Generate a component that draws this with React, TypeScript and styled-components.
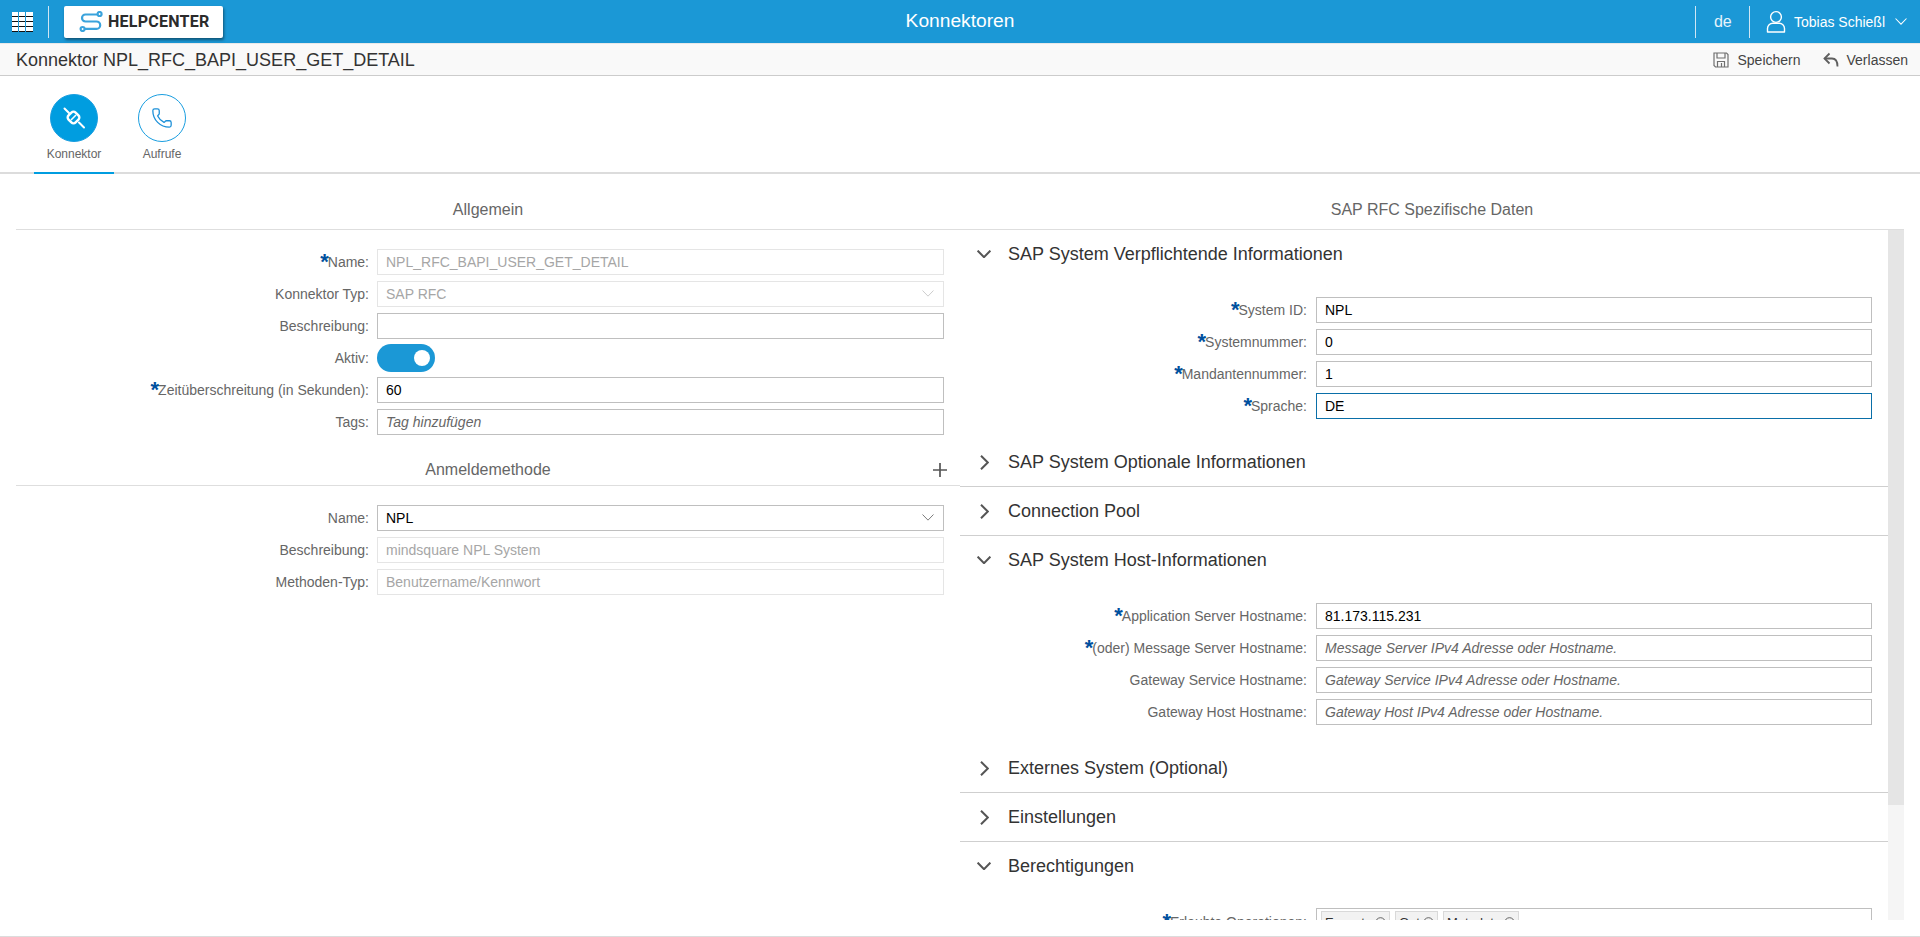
import React from "react";
import styled, { createGlobalStyle } from "styled-components";
import { Phone } from "lucide-react";

const Global = createGlobalStyle`
  html, body { margin: 0; padding: 0; height: 100%; background: #fff; overflow: hidden; }
  body { font-family: "Liberation Sans", Arial, sans-serif; color: #333; }
  #root { height: 100%; }
  * { box-sizing: border-box; }
`;

const Shell = styled.div`
  display: flex;
  flex-direction: column;
  height: 937px;
  overflow: hidden;
`;

/* ---------- top bar ---------- */
const TopBar = styled.header`
  flex: 0 0 43px;
  display: grid;
  grid-template-columns: 1fr auto 1fr;
  align-items: center;
  background: #1b98d6;
  color: #fff;
`;
const BarLeft = styled.div`
  display: flex;
  align-items: center;
  padding-left: 12px;
`;
const BarRight = styled.div`
  display: flex;
  align-items: center;
  justify-content: flex-end;
  padding-right: 13px;
`;
const BarTitle = styled.div`
  font-size: 19.2px;
  line-height: 22px;
  margin-top: -1px;
`;
const BarDivider = styled.span<{ $l: number; $r: number }>`
  width: 1px;
  height: 32px;
  background: #cfe6f4;
  margin: 0 ${(p) => p.$r}px 0 ${(p) => p.$l}px;
`;
const LogoBox = styled.div`
  width: 159px;
  height: 32px;
  background: #fff;
  border-radius: 2px;
  box-shadow: 1px 2px 3px rgba(0, 0, 0, 0.45);
  display: flex;
  align-items: center;
  padding-left: 15px;
  gap: 5px;
`;
const LogoText = styled.span`
  font-family: Roboto, "Liberation Sans", sans-serif;
  font-weight: 700;
  font-size: 16px;
  letter-spacing: 0.25px;
  color: #2b2b2b;
  line-height: 32px;
`;
const Lang = styled.span`
  font-size: 16px;
  color: #e6f3fb;
  width: 18px;
`;
const UserName = styled.span`
  font-size: 14px;
  color: #fff;
  margin: 0 10px 0 8px;
`;

/* ---------- sub bar ---------- */
const SubBar = styled.div`
  flex: 0 0 33px;
  display: flex;
  align-items: center;
  justify-content: space-between;
  background: #f9f9f9;
  border-top: 1px solid #e8e8e8;
  border-bottom: 1px solid #cccccc;
  padding: 0 12px 0 16px;
`;
const PageTitle = styled.h1`
  margin: 0;
  font-size: 18px;
  font-weight: 400;
  line-height: 24px;
  color: #333;
`;
const Actions = styled.div`
  display: flex;
  align-items: center;
  gap: 22px;
`;
const Action = styled.button`
  display: flex;
  align-items: center;
  gap: 8px;
  background: none;
  border: 0;
  padding: 0;
  font: inherit;
  font-size: 14px;
  color: #444;
  svg { flex: none; }
`;

/* ---------- icon tabs ---------- */
const TabBar = styled.nav`
  flex: 0 0 98px;
  min-height: 0;
  display: flex;
  align-items: flex-start;
  gap: 8px;
  padding-left: 34px;
  border-bottom: 2px solid #dcdcdc;
`;
const Tab = styled.div<{ $active?: boolean }>`
  width: 80px;
  height: 98px;
  flex: none;
  padding-top: 18px;
  display: flex;
  flex-direction: column;
  align-items: center;
  border-bottom: 2px solid ${(p) => (p.$active ? "#009de0" : "transparent")};
`;
const TabCircle = styled.div<{ $active?: boolean }>`
  width: 48px;
  height: 48px;
  border-radius: 50%;
  display: flex;
  align-items: center;
  justify-content: center;
  border: 1px solid #1a9ee0;
  background: ${(p) => (p.$active ? "#009de0" : "#fff")};
  color: ${(p) => (p.$active ? "#fff" : "#1a8fd8")};
`;
const TabLabel = styled.span`
  font-size: 12px;
  line-height: 14px;
  color: #666;
  margin-top: 5px;
`;

/* ---------- columns ---------- */
const Columns = styled.main`
  flex: 1 1 auto;
  min-height: 0;
  display: grid;
  grid-template-columns: 960px 960px;
  grid-template-rows: minmax(0, 1fr);
`;
const LeftColumn = styled.section`
  padding-left: 16px;
  min-height: 0;
`;
const RightColumn = styled.section`
  padding-right: 16px;
  min-height: 0;
  display: flex;
  flex-direction: column;
`;
const SectionHead = styled.div<{ $compact?: boolean }>`
  position: relative;
  flex: none;
  height: ${(p) => (p.$compact ? 51 : 56)}px;
  border-bottom: 1px solid #dedede;
  display: flex;
  align-items: flex-end;
  justify-content: center;
  padding-bottom: ${(p) => (p.$compact ? 6 : 10)}px;
`;
const SectionTitle = styled.h2`
  margin: 0;
  font-size: 16px;
  line-height: 18px;
  font-weight: 400;
  color: #666;
`;
const AddButton = styled.button`
  position: absolute;
  right: 12px;
  bottom: 7px;
  width: 16px;
  height: 16px;
  padding: 0;
  border: 0;
  background: none;
  color: #555;
  display: flex;
`;
const FormBlock = styled.div`
  padding: 19px 16px 0 0;
  display: flex;
  flex-direction: column;
  gap: 6px;
`;
const Row = styled.div<{ $label: number; $gap: number }>`
  display: grid;
  grid-template-columns: ${(p) => p.$label}px 1fr;
  column-gap: ${(p) => p.$gap}px;
  align-items: center;
  height: 26px;
`;
const Label = styled.label`
  text-align: right;
  font-size: 14px;
  line-height: 26px;
  color: #666;
  white-space: nowrap;
`;
const Star = styled.span`
  color: #00509e;
  font-size: 22px;
  line-height: 14px;
  font-weight: 700;
  vertical-align: -2px;
  margin-right: -1px;
`;
const Input = styled.input<{ $focus?: boolean }>`
  width: 100%;
  height: 26px;
  padding: 0 8px;
  font-family: "Liberation Sans", Arial, sans-serif;
  font-size: 14px;
  color: #000;
  background: #fff;
  border: 1px solid ${(p) => (p.$focus ? "#0a6fa8" : "#bfbfbf")};
  outline: none;
  &::placeholder { color: #666; font-style: italic; opacity: 1; }
  &:disabled { color: #a6a6a6; border-color: #e5e5e5; }
`;
const Select = styled.div<{ $disabled?: boolean }>`
  height: 26px;
  padding: 0 9px 0 8px;
  display: flex;
  align-items: center;
  justify-content: space-between;
  font-size: 14px;
  color: ${(p) => (p.$disabled ? "#a6a6a6" : "#000")};
  border: 1px solid ${(p) => (p.$disabled ? "#e5e5e5" : "#bfbfbf")};
  svg { color: ${(p) => (p.$disabled ? "#c4c4c4" : "#666")}; }
`;
const Toggle = styled.div`
  width: 58px;
  height: 28px;
  margin: -1px 0;
  border-radius: 14px;
  background: #1b98d6;
  display: flex;
  align-items: center;
  justify-content: flex-end;
  padding-right: 5px;
`;
const Knob = styled.span`
  width: 16px;
  height: 16px;
  border-radius: 50%;
  background: #fff;
`;

/* ---------- accordion ---------- */
const ScrollWrap = styled.div`
  flex: 1 1 auto;
  min-height: 0;
  display: flex;
  overflow: hidden;
`;
const Accordion = styled.div`
  flex: 1 1 auto;
  min-width: 0;
  overflow: hidden;
`;
const Track = styled.div`
  flex: 0 0 16px;
  background: #f5f5f5;
`;
const Thumb = styled.div`
  height: 575px;
  background: #e5e5e5;
`;
const Item = styled.div<{ $rule?: boolean }>`
  border-bottom: ${(p) => (p.$rule ? "1px solid #cfcfcf" : "0")};
`;
const ItemHead = styled.div`
  height: 48px;
  display: flex;
  align-items: center;
  padding-left: 16px;
  color: #555;
`;
const ChevronSlot = styled.span`
  width: 16px;
  margin-right: 16px;
  display: flex;
  justify-content: center;
`;
const ItemTitle = styled.h3`
  margin: 0;
  font-size: 18px;
  font-weight: 400;
  line-height: 22px;
  color: #333;
`;
const ItemBody = styled.div`
  padding: 19px 16px 19px 0;
  display: flex;
  flex-direction: column;
  gap: 6px;
`;
const ChipField = styled.div`
  min-height: 26px;
  border: 1px solid #bfbfbf;
  padding: 2px 4px;
  display: flex;
  gap: 5px;
`;
const Chip = styled.span`
  display: inline-flex;
  align-items: center;
  gap: 3px;
  height: 22px;
  padding: 0 3px;
  font-size: 13px;
  color: #333;
  background: #f2f2f2;
  border: 1px solid #d9d9d9;
`;
const Footer = styled.footer`
  flex: 0 0 17px;
  background: #fff;
  border-bottom: 1px solid #dcdcdc;
`;

/* ---------- drawings ---------- */
const GridIcon = () => (
  <svg width="21" height="20" viewBox="0 0 21 20" style={{ display: "block" }}>
    <rect width="21" height="20" fill="#fff" />
    <g fill="#111">
      <rect x="0" y="4" width="21" height="1" />
      <rect x="0" y="9" width="21" height="1" />
      <rect x="0" y="14" width="21" height="1" />
      <rect x="0" y="19" width="21" height="1" />
    </g>
    <g fill="#1b98d6">
      <rect x="6" y="0" width="1" height="20" />
      <rect x="13" y="0" width="1" height="20" />
    </g>
  </svg>
);

const LogoMark = () => (
  <svg width="24" height="21" viewBox="0 0 24 21" fill="none">
    <g stroke="#3aa3dc" strokeWidth="2.2" strokeLinecap="round">
      <path d="M18.5 3.5H6.5a3.5 3.5 0 0 0 0 7h11a3.7 3.7 0 0 1 0 7.4H6.5" />
      <circle cx="20.6" cy="3" r="2" fill="#fff" />
      <circle cx="3.6" cy="18" r="2" fill="#fff" />
    </g>
  </svg>
);

const PlugIcon = () => (
  <svg width="24" height="24" viewBox="0 0 24 24" fill="none" stroke="currentColor" strokeWidth="2">
    <path d="M2.5 2.5 7 7M17 16.5l5 5" strokeLinecap="round" />
    <rect x="6.5" y="6.5" width="10" height="10" rx="3" transform="rotate(45 11.5 11.5)" strokeWidth="2.4" />
    <path d="M9 14l5-5" strokeWidth="1.6" />
  </svg>
);

const UserIcon = () => (
  <svg width="20" height="23" viewBox="0 0 20 23" fill="none" stroke="#fff" strokeWidth="1.4">
    <circle cx="10" cy="7" r="5.4" />
    <path d="M1.5 22v-3.5c0-3 2.5-5.2 5.2-5.2h6.6c2.7 0 5.2 2.2 5.2 5.2V22z" strokeLinejoin="round" />
  </svg>
);

const SaveIcon = () => (
  <svg width="16" height="16" viewBox="0 0 16 16" fill="none" stroke="#6f6f6f" strokeWidth="1.2">
    <path d="M1 1h12.5L15 2.5V15H2.5L1 13.5z" />
    <path d="M4 1v5h8V1M4.5 15V9.5h7V15M8.5 11v4" />
  </svg>
);

const ReplyIcon = () => (
  <svg width="16" height="16" viewBox="0 0 16 16" fill="none" stroke="#5f5f5f" strokeWidth="1.8">
    <path d="M6.5 1.5 1.5 6.5l5 5" />
    <path d="M1.5 6.5H9c3.5 0 5.5 2.5 5.5 8" />
  </svg>
);

const Chevron = ({ dir, size = 14, weight = 2 }: { dir: "down" | "right"; size?: number; weight?: number }) =>
  dir === "down" ? (
    <svg width={size} height={size * 0.6} viewBox="0 0 14 8.4" fill="none" stroke="currentColor" strokeWidth={weight}>
      <path d="M.6.6 7 7.2 13.4.6" />
    </svg>
  ) : (
    <svg width="9" height="15" viewBox="0 0 9 15" fill="none" stroke="currentColor" strokeWidth={weight}>
      <path d="M1 .8 7.8 7.5 1 14.2" />
    </svg>
  );

const CloseDot = () => (
  <svg width="11" height="11" viewBox="0 0 11 11" fill="none" stroke="#555" strokeWidth="0.9">
    <circle cx="5.5" cy="5.5" r="4.8" />
    <path d="M3.7 3.7l3.6 3.6M7.3 3.7 3.7 7.3" />
  </svg>
);

const Req = ({ children }: { children: React.ReactNode }) => (
  <Label>
    <Star>*</Star>
    {children}
  </Label>
);

const LEFT = { $label: 353, $gap: 8 };
const RIGHT = { $label: 347, $gap: 9 };

export default function App() {
  return (
    <Shell>
      <Global />
      <TopBar>
        <BarLeft>
          <GridIcon />
          <BarDivider $l={15} $r={15} />
          <LogoBox>
            <LogoMark />
            <LogoText>HELPCENTER</LogoText>
          </LogoBox>
        </BarLeft>
        <BarTitle>Konnektoren</BarTitle>
        <BarRight>
          <BarDivider $l={0} $r={18} />
          <Lang>de</Lang>
          <BarDivider $l={17} $r={16} />
          <UserIcon />
          <UserName>Tobias Schießl</UserName>
          <Chevron dir="down" size={12} weight={1.2} />
        </BarRight>
      </TopBar>

      <SubBar>
        <PageTitle>Konnektor NPL_RFC_BAPI_USER_GET_DETAIL</PageTitle>
        <Actions>
          <Action>
            <SaveIcon />
            Speichern
          </Action>
          <Action>
            <ReplyIcon />
            Verlassen
          </Action>
        </Actions>
      </SubBar>

      <TabBar>
        <Tab $active>
          <TabCircle $active>
            <PlugIcon />
          </TabCircle>
          <TabLabel>Konnektor</TabLabel>
        </Tab>
        <Tab>
          <TabCircle>
            <Phone size={22} strokeWidth={1.4} />
          </TabCircle>
          <TabLabel>Aufrufe</TabLabel>
        </Tab>
      </TabBar>

      <Columns>
        <LeftColumn>
          <SectionHead>
            <SectionTitle>Allgemein</SectionTitle>
          </SectionHead>
          <FormBlock>
            <Row {...LEFT}>
              <Req>Name:</Req>
              <Input disabled defaultValue="NPL_RFC_BAPI_USER_GET_DETAIL" />
            </Row>
            <Row {...LEFT}>
              <Label>Konnektor Typ:</Label>
              <Select $disabled>
                SAP RFC
                <Chevron dir="down" size={12} weight={1} />
              </Select>
            </Row>
            <Row {...LEFT}>
              <Label>Beschreibung:</Label>
              <Input />
            </Row>
            <Row {...LEFT}>
              <Label>Aktiv:</Label>
              <Toggle>
                <Knob />
              </Toggle>
            </Row>
            <Row {...LEFT}>
              <Req>Zeitüberschreitung (in Sekunden):</Req>
              <Input defaultValue="60" />
            </Row>
            <Row {...LEFT}>
              <Label>Tags:</Label>
              <Input placeholder="Tag hinzufügen" />
            </Row>
          </FormBlock>

          <SectionHead $compact>
            <SectionTitle>Anmeldemethode</SectionTitle>
            <AddButton aria-label="Hinzufügen">
              <svg width="16" height="16" viewBox="0 0 16 16" stroke="currentColor" strokeWidth="1.7">
                <path d="M8 1v14M1 8h14" />
              </svg>
            </AddButton>
          </SectionHead>
          <FormBlock>
            <Row {...LEFT}>
              <Label>Name:</Label>
              <Select>
                NPL
                <Chevron dir="down" size={12} weight={1} />
              </Select>
            </Row>
            <Row {...LEFT}>
              <Label>Beschreibung:</Label>
              <Input disabled defaultValue="mindsquare NPL System" />
            </Row>
            <Row {...LEFT}>
              <Label>Methoden-Typ:</Label>
              <Input disabled defaultValue="Benutzername/Kennwort" />
            </Row>
          </FormBlock>
        </LeftColumn>

        <RightColumn>
          <SectionHead>
            <SectionTitle>SAP RFC Spezifische Daten</SectionTitle>
          </SectionHead>
          <ScrollWrap>
            <Accordion>
              <Item>
                <ItemHead>
                  <ChevronSlot>
                    <Chevron dir="down" />
                  </ChevronSlot>
                  <ItemTitle>SAP System Verpflichtende Informationen</ItemTitle>
                </ItemHead>
                <ItemBody>
                  <Row {...RIGHT}>
                    <Req>System ID:</Req>
                    <Input defaultValue="NPL" />
                  </Row>
                  <Row {...RIGHT}>
                    <Req>Systemnummer:</Req>
                    <Input defaultValue="0" />
                  </Row>
                  <Row {...RIGHT}>
                    <Req>Mandantennummer:</Req>
                    <Input defaultValue="1" />
                  </Row>
                  <Row {...RIGHT}>
                    <Req>Sprache:</Req>
                    <Input $focus defaultValue="DE" />
                  </Row>
                </ItemBody>
              </Item>
              <Item $rule>
                <ItemHead>
                  <ChevronSlot>
                    <Chevron dir="right" />
                  </ChevronSlot>
                  <ItemTitle>SAP System Optionale Informationen</ItemTitle>
                </ItemHead>
              </Item>
              <Item $rule>
                <ItemHead>
                  <ChevronSlot>
                    <Chevron dir="right" />
                  </ChevronSlot>
                  <ItemTitle>Connection Pool</ItemTitle>
                </ItemHead>
              </Item>
              <Item>
                <ItemHead>
                  <ChevronSlot>
                    <Chevron dir="down" />
                  </ChevronSlot>
                  <ItemTitle>SAP System Host-Informationen</ItemTitle>
                </ItemHead>
                <ItemBody>
                  <Row {...RIGHT}>
                    <Req>Application Server Hostname:</Req>
                    <Input defaultValue="81.173.115.231" />
                  </Row>
                  <Row {...RIGHT}>
                    <Req>(oder) Message Server Hostname:</Req>
                    <Input placeholder="Message Server IPv4 Adresse oder Hostname." />
                  </Row>
                  <Row {...RIGHT}>
                    <Label>Gateway Service Hostname:</Label>
                    <Input placeholder="Gateway Service IPv4 Adresse oder Hostname." />
                  </Row>
                  <Row {...RIGHT}>
                    <Label>Gateway Host Hostname:</Label>
                    <Input placeholder="Gateway Host IPv4 Adresse oder Hostname." />
                  </Row>
                </ItemBody>
              </Item>
              <Item $rule>
                <ItemHead>
                  <ChevronSlot>
                    <Chevron dir="right" />
                  </ChevronSlot>
                  <ItemTitle>Externes System (Optional)</ItemTitle>
                </ItemHead>
              </Item>
              <Item $rule>
                <ItemHead>
                  <ChevronSlot>
                    <Chevron dir="right" />
                  </ChevronSlot>
                  <ItemTitle>Einstellungen</ItemTitle>
                </ItemHead>
              </Item>
              <Item>
                <ItemHead>
                  <ChevronSlot>
                    <Chevron dir="down" />
                  </ChevronSlot>
                  <ItemTitle>Berechtigungen</ItemTitle>
                </ItemHead>
                <ItemBody>
                  <Row {...RIGHT}>
                    <Req>Erlaubte Operationen:</Req>
                    <ChipField>
                      <Chip>
                        Execute <CloseDot />
                      </Chip>
                      <Chip>
                        Get <CloseDot />
                      </Chip>
                      <Chip>
                        Metadata <CloseDot />
                      </Chip>
                    </ChipField>
                  </Row>
                </ItemBody>
              </Item>
            </Accordion>
            <Track>
              <Thumb />
            </Track>
          </ScrollWrap>
        </RightColumn>
      </Columns>
      <Footer />
    </Shell>
  );
}
